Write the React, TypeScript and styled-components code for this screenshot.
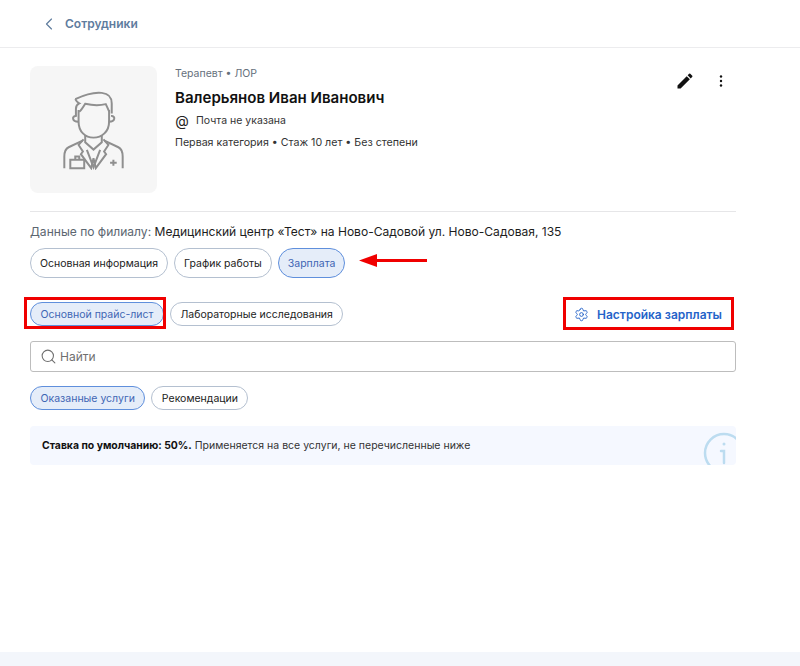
import styled, { createGlobalStyle } from "styled-components";
import { ChevronLeft, Search, Settings } from "lucide-react";

const GlobalStyle = createGlobalStyle`
  html, body {
    margin: 0;
    padding: 0;
    background: #fff;
  }

  body {
    font-family: Inter, "Liberation Sans", sans-serif;
    color: #1a1a1a;
  }

  * {
    box-sizing: border-box;
  }
`;

const Page = styled.div`
  position: relative;
  width: 800px;
  height: 666px;
  display: flex;
  flex-direction: column;
  overflow: hidden;
`;

const Header = styled.div`
  height: 48px;
  flex: none;
  display: flex;
  align-items: center;
  gap: 6px;
  padding-left: 39px;
  border-bottom: 1px solid #ececee;
  color: #5f7c9e;
  font-size: 12px;
  font-weight: 600;
`;

const Content = styled.div`
  flex: 1;
  width: 736px;
  padding: 18px 0 0 30px;
`;

const Profile = styled.div`
  height: 146px;
  display: flex;
  border-bottom: 1px solid #e6e6e8;
`;

const Avatar = styled.div`
  width: 127px;
  height: 127px;
  flex: none;
  display: flex;
  align-items: center;
  justify-content: center;
  background: #f6f6f6;
  border-radius: 8px;
`;

const Info = styled.div`
  flex: 1;
  margin-left: 18px;
  display: flex;
  flex-direction: column;
`;

const Speciality = styled.div`
  font-size: 10.5px;
  line-height: 16px;
  color: #66707c;
`;

const Name = styled.div`
  margin-top: 6px;
  font-size: 15.05px;
  line-height: 20px;
  font-weight: 600;
  color: #111;
`;

const Email = styled.div`
  margin-top: 5px;
  display: flex;
  align-items: center;
  gap: 7px;
  font-size: 10.5px;
  line-height: 16px;
  color: #333;
`;

const AtSign = styled.span`
  width: 14px;
  font-size: 14px;
  line-height: 16px;
  text-align: center;
  color: #222;
`;

const Meta = styled.div`
  margin-top: 6px;
  font-size: 10.65px;
  line-height: 16px;
  color: #333;
`;

const Actions = styled.div`
  display: flex;
  align-items: center;
  align-self: flex-start;
  gap: 17px;
  padding: 5px 6px 0 0;
`;

const Branch = styled.div`
  margin-top: 12px;
  font-size: 12.05px;
  line-height: 16px;
  color: #5c6670;

  b {
    font-weight: 400;
    color: #1d1d1d;
  }
`;

const Tabs = styled.div`
  display: flex;
  gap: 6px;
  margin-top: 8px;
`;

const Pill = styled.div<{ $active?: boolean; $small?: boolean }>`
  height: ${(p) => (p.$small ? "24px" : "30px")};
  padding: 0 ${(p) => (p.$small ? "9.5px" : "9px")};
  display: flex;
  align-items: center;
  font-size: 10.5px;
  white-space: nowrap;
  border-radius: 15px;
  color: ${(p) => (p.$active ? "#3f66b4" : "#222")};
  background: ${(p) => (p.$active ? "#e5edf9" : "#fff")};
  border: 1px solid ${(p) => (p.$active ? "#5f8fdc" : "#b4c0d0")};
`;

const PriceRow = styled.div`
  margin-top: 24px;
  height: 24px;
  display: flex;
  align-items: center;
  justify-content: space-between;
`;

const PriceTabs = styled.div`
  display: flex;
  gap: 6px;
`;

const Marked = styled.div`
  position: relative;

  &::after {
    content: "";
    position: absolute;
    left: -6px;
    right: -2px;
    top: -5px;
    bottom: -3px;
    border: 3px solid #f00000;
    pointer-events: none;
  }
`;

const SalaryMarked = styled(Marked)`
  margin-right: 2px;

  &::after {
    left: 0;
    right: 0;
    top: -5px;
    bottom: -4px;
  }
`;

const SalaryLink = styled.div`
  width: 171px;
  height: 24px;
  padding-left: 11px;
  display: flex;
  align-items: center;
  gap: 8px;
  font-size: 12px;
  font-weight: 600;
  color: #2563c9;
  white-space: nowrap;
`;

const SearchBox = styled.div`
  margin-top: 15px;
  height: 31px;
  display: flex;
  align-items: center;
  gap: 3px;
  padding-left: 9px;
  border: 1px solid #bdbdbd;
  border-radius: 3px;
  font-size: 12px;
  color: #6f6f6f;
`;

const Chips = styled(Tabs)`
  margin-top: 14px;
`;

const Notice = styled.div`
  position: relative;
  margin-top: 16px;
  height: 39px;
  display: flex;
  align-items: center;
  padding-left: 12px;
  background: #f5f8ff;
  border-radius: 4px;
  overflow: hidden;
  font-size: 10.5px;
  color: #333;

  b {
    font-size: 10.4px;
    font-weight: 700;
    color: #111;
    margin-right: 3px;
  }
`;

const NoticeIcon = styled.svg`
  position: absolute;
  right: -10px;
  top: 5px;
`;

const Footer = styled.div`
  height: 14px;
  flex: none;
  background: #f3f6fb;
`;

const ArrowMark = styled.svg`
  position: absolute;
  left: 359px;
  top: 254px;
`;

const DoctorIcon = () => (
  <svg width="63" height="80" viewBox="95 70 190 240" fill="none" stroke="#8f8f8f" strokeWidth="6">
    <path d="M135 97c25-12 55-22 80-19 20 2 30 14 30 32v30" />
    <path d="M135 97c3 6 6 10 12 13-6 3-10 8-10 16v24" />
    <path d="M147 135c6-4 12-14 18-24 22 5 46 5 62 1 4 8 7 15 10 22" />
    <path d="M145 130v35c0 30 20 48 45 48s47-18 47-48v-35" />
    <path d="M138 148c-14-2-14 18 8 17M243 148c14-2 14 18-8 17" />
    <path d="M165 205v22l25 22 25-22v-22" />
    <path d="M157 222l-42 20c-10 5-13 13-13 28v35M223 222l42 20c10 5 13 13 13 28v35" />
    <path d="M160 218l-15 17 13 20-6 8 31 42 7-30 7 30 31-42-6-8 13-20-15-17" />
    <path d="M170 250l20 52 20-52" />
    <path d="M120 280h42v25h-42zM135 280v-10h12v10" />
    <path d="M250 280v18M240 289h20" />
  </svg>
);

const App = () => {
  return (
    <Page>
      <GlobalStyle />
      <Header>
        <ChevronLeft size={20} strokeWidth={1.4} />
        Сотрудники
      </Header>
      <Content>
        <Profile>
          <Avatar>
            <DoctorIcon />
          </Avatar>
          <Info>
            <Speciality>Терапевт • ЛОР</Speciality>
            <Name>Валерьянов Иван Иванович</Name>
            <Email>
              <AtSign>@</AtSign>
              Почта не указана
            </Email>
            <Meta>Первая категория • Стаж 10 лет • Без степени</Meta>
          </Info>
          <Actions>
            <svg width="20" height="20" viewBox="0 0 24 24" fill="#111">
              <path d="M3 17.250V21h3.750L17.810 9.940l-3.750-3.750L3 17.250zM20.710 7.040a1 1 0 0 0 0-1.410l-2.340-2.340a1 1 0 0 0-1.410 0l-1.830 1.830 3.750 3.750 1.830-1.830z" />
            </svg>
            <svg width="18" height="18" viewBox="0 0 24 24" fill="#111">
              <circle cx="12" cy="6" r="1.600" />
              <circle cx="12" cy="12" r="1.600" />
              <circle cx="12" cy="18" r="1.600" />
            </svg>
          </Actions>
        </Profile>
        <Branch>
          Данные по филиалу: <b>Медицинский центр «Тест» на Ново-Садовой ул. Ново-Садовая, 135</b>
        </Branch>
        <Tabs>
          <Pill>Основная информация</Pill>
          <Pill>График работы</Pill>
          <Pill $active>Зарплата</Pill>
        </Tabs>
        <PriceRow>
          <PriceTabs>
            <Marked>
              <Pill $small $active>
                Основной прайс-лист
              </Pill>
            </Marked>
            <Pill $small>Лабораторные исследования</Pill>
          </PriceTabs>
          <SalaryMarked>
            <SalaryLink>
              <Settings size={15} strokeWidth={1.5} />
              Настройка зарплаты
            </SalaryLink>
          </SalaryMarked>
        </PriceRow>
        <SearchBox>
          <Search size={17} strokeWidth={1.5} />
          Найти
        </SearchBox>
        <Chips>
          <Pill $small $active>
            Оказанные услуги
          </Pill>
          <Pill $small>Рекомендации</Pill>
        </Chips>
        <Notice>
          <b>Ставка по умолчанию: 50%.</b> Применяется на все услуги, не перечисленные ниже
          <NoticeIcon width="44" height="44" viewBox="0 0 44 44" fill="none" stroke="#bcdcf0" strokeWidth="2.500">
            <circle cx="22" cy="22" r="19" />
            <circle cx="22" cy="13" r="1.500" fill="#bcdcf0" stroke="none" />
            <path d="M19 20h3v12" strokeLinecap="round" />
          </NoticeIcon>
        </Notice>
      </Content>
      <Footer />
      <ArrowMark width="68" height="13" viewBox="0 0 68 13">
        <path d="M0 6.500L18 0v5h50v3H18v5z" fill="#f00000" />
      </ArrowMark>
    </Page>
  );
};

export default App;
